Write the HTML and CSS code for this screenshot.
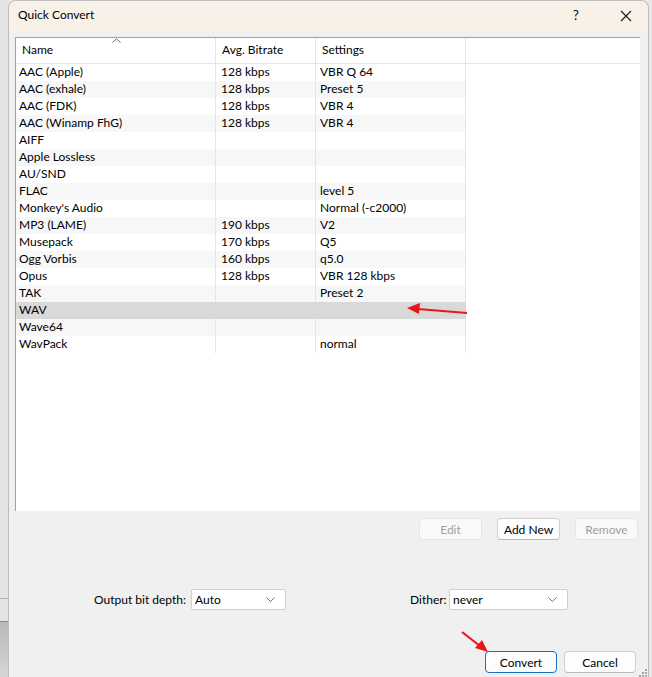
FILE: index.html
```html
<!DOCTYPE html>
<html lang="en">
<head>
  <meta charset="UTF-8" />
  <title>Quick Convert</title>
  <link rel="stylesheet" href="styles.css">
</head>
<body>

  <div class="backdrop">
    <div class="backdrop-line one"></div>
    <div class="backdrop-line two"></div>
    <div class="backdrop-shade"></div>
  </div>

  <div class="dialog">
    <div class="titlebar">
      <span class="title">Quick Convert</span>
      <span class="title-help">?</span>
      <span class="title-close">
        <svg width="12" height="12" viewBox="0 0 12 12"><path d="M1 1 L11 11 M11 1 L1 11" stroke="#1a1a1a" stroke-width="1.1" fill="none"/></svg>
      </span>
    </div>

    <div class="dialog-body">
      <div class="list-box">
        <div class="list-header">
          <div class="head-cell name">Name
            <svg class="sort-arrow" width="9" height="5" viewBox="0 0 9 5"><path d="M0.5 4.5 L4.5 0.8 L8.5 4.5" stroke="#6e6e6e" stroke-width="1" fill="none"/></svg>
          </div>
          <div class="head-cell bitrate">Avg. Bitrate</div>
          <div class="head-cell settings">Settings</div>
          <div class="head-cell rest"></div>
        </div>
        <div class="list-rows">
          <div class="row"><span>AAC (Apple)</span><span>128 kbps</span><span>VBR Q 64</span></div>
          <div class="row"><span>AAC (exhale)</span><span>128 kbps</span><span>Preset 5</span></div>
          <div class="row"><span>AAC (FDK)</span><span>128 kbps</span><span>VBR 4</span></div>
          <div class="row"><span>AAC (Winamp FhG)</span><span>128 kbps</span><span>VBR 4</span></div>
          <div class="row"><span>AIFF</span><span></span><span></span></div>
          <div class="row"><span>Apple Lossless</span><span></span><span></span></div>
          <div class="row"><span>AU/SND</span><span></span><span></span></div>
          <div class="row"><span>FLAC</span><span></span><span>level 5</span></div>
          <div class="row"><span>Monkey's Audio</span><span></span><span>Normal (-c2000)</span></div>
          <div class="row"><span>MP3 (LAME)</span><span>190 kbps</span><span>V2</span></div>
          <div class="row"><span>Musepack</span><span>170 kbps</span><span>Q5</span></div>
          <div class="row"><span>Ogg Vorbis</span><span>160 kbps</span><span>q5.0</span></div>
          <div class="row"><span>Opus</span><span>128 kbps</span><span>VBR 128 kbps</span></div>
          <div class="row"><span>TAK</span><span></span><span>Preset 2</span></div>
          <div class="row selected"><span>WAV</span><span></span><span></span></div>
          <div class="row"><span>Wave64</span><span></span><span></span></div>
          <div class="row"><span>WavPack</span><span></span><span>normal</span></div>
        </div>
      </div>

      <div class="list-buttons">
        <button class="btn disabled">Edit</button>
        <button class="btn">Add New</button>
        <button class="btn disabled">Remove</button>
      </div>

      <div class="options">
        <div class="option bit-depth">
          <label>Output bit depth:</label>
          <div class="select narrow">Auto
            <svg width="9" height="5" viewBox="0 0 9 5"><path d="M0.5 0.5 L4.5 4.5 L8.5 0.5" stroke="#6e6e6e" stroke-width="1" fill="none"/></svg>
          </div>
        </div>
        <div class="option dither">
          <label>Dither:</label>
          <div class="select wide">never
            <svg width="9" height="5" viewBox="0 0 9 5"><path d="M0.5 0.5 L4.5 4.5 L8.5 0.5" stroke="#6e6e6e" stroke-width="1" fill="none"/></svg>
          </div>
        </div>
      </div>

      <div class="dialog-buttons">
        <button class="btn default">Convert</button>
        <button class="btn">Cancel</button>
      </div>
    </div>

    <svg class="grip" width="8" height="8" viewBox="0 0 8 8">
      <rect x="6" y="0" width="2" height="2" fill="#a8a8a8"/>
      <rect x="3" y="3" width="2" height="2" fill="#a8a8a8"/>
      <rect x="6" y="3" width="2" height="2" fill="#a8a8a8"/>
      <rect x="0" y="6" width="2" height="2" fill="#a8a8a8"/>
      <rect x="3" y="6" width="2" height="2" fill="#a8a8a8"/>
      <rect x="6" y="6" width="2" height="2" fill="#a8a8a8"/>
    </svg>
  </div>

  <!-- annotation arrows drawn over the screenshot -->
  <svg class="annotations" width="652" height="677" viewBox="0 0 652 677">
    <path d="M467 313 L418 309" stroke="#e8161b" stroke-width="2.2" fill="none"/>
    <path d="M407 308 L420 303 L419 314 Z" fill="#e8161b"/>
    <path d="M462 632 L480 646" stroke="#e8161b" stroke-width="2.2" fill="none"/>
    <path d="M488 652 L475 648 L482 640 Z" fill="#e8161b"/>
  </svg>

</body>
</html>
```

FILE: styles.css
```css
body {
  margin: 0;
  padding: 0;
  width: 652px;
  height: 677px;
  overflow: hidden;
  background-color: #e8e8e8;
  font-family: Lato, "Noto Sans", sans-serif;
  font-size: 12px;
  color: #000;
  position: relative;
}

.backdrop {
  position: absolute;
  left: 0;
  top: 0;
  width: 8px;
  height: 677px;
  background-color: #e4e4e4;
}

.backdrop-line {
  position: absolute;
  left: 0;
  width: 8px;
  height: 1px;
  background-color: #b4b4b4;
}

.backdrop-line.one {
  top: 598px;
}

.backdrop-line.two {
  top: 621px;
  background-color: #8c8c8c;
}

.backdrop-shade {
  position: absolute;
  left: 0;
  top: 622px;
  width: 8px;
  height: 55px;
  background: linear-gradient(#b8b8b8, #d6d6d6);
}

.dialog {
  position: relative;
  margin-left: 8px;
  width: 639px;
  height: 677px;
  border: 1px solid #bdbdbd;
  border-bottom: none;
  border-radius: 8px 8px 0 0;
  background-color: #f0f0f0;
  display: flex;
  flex-direction: column;
  overflow: hidden;
}

.titlebar {
  height: 30px;
  flex-shrink: 0;
  background-color: #f8f1e8;
  display: flex;
  align-items: center;
  padding-left: 9px;
  padding-bottom: 3px;
  box-sizing: border-box;
}

.title {
  flex: 1;
  font-size: 12px;
}

.title-help {
  width: 20px;
  font-size: 13px;
  margin-right: 27px;
}

.title-close {
  width: 28px;
  display: flex;
  align-items: center;
  padding-top: 2px;
}

.dialog-body {
  flex: 1;
  padding: 6px 8px 0 6px;
  display: flex;
  flex-direction: column;
}

.list-box {
  height: 474px;
  background-color: #fff;
  border-top: 1px solid #a0a0a0;
  border-left: 1px solid #a0a0a0;
  box-sizing: border-box;
  width: 625px;
}

.list-header {
  display: flex;
  height: 25px;
  border-bottom: 1px solid #e5e5e5;
}

.head-cell {
  position: relative;
  border-right: 1px solid #e5e5e5;
  padding-left: 6px;
  line-height: 23px;
  padding-bottom: 2px;
  box-sizing: border-box;
}

.head-cell.name {
  width: 200px;
}

.head-cell.bitrate {
  width: 100px;
}

.head-cell.settings {
  width: 150px;
}

.head-cell.rest {
  flex: 1;
  border-right: none;
}

.sort-arrow {
  position: absolute;
  left: 96px;
  top: 0;
}

.list-rows {
  width: 450px;
}

.row {
  display: grid;
  grid-template-columns: 200px 100px 150px;
  height: 17px;
}

.row:nth-child(even) {
  background-color: #f7f7f7;
}

.row.selected {
  background-color: #d9d9d9;
}

.row span {
  border-right: 1px solid #e5e5e5;
  padding-left: 3px;
  line-height: 15px;
  white-space: nowrap;
}

.row.selected span {
  border-right-color: #d9d9d9;
}

.row span:nth-child(2) {
  padding-left: 5px;
}

.row span:nth-child(3) {
  padding-left: 4px;
}

.btn {
  font-family: Lato, "Noto Sans", sans-serif;
  font-size: 12px;
  height: 22px;
  background-color: #fdfdfd;
  border: 1px solid #d0d0d0;
  border-bottom-color: #b8b8b8;
  border-radius: 4px;
  color: #000;
  padding: 0;
}

.btn.disabled {
  background-color: #f9f9f9;
  border-color: #e5e5e5;
  color: #a0a0a0;
}

.btn.default {
  border: 1px solid #1a6fc3;
}

.list-buttons {
  display: flex;
  justify-content: flex-end;
  gap: 15px;
  margin-top: 7px;
  padding-right: 2px;
}

.list-buttons .btn {
  width: 63px;
}

.options {
  display: flex;
  margin-top: 49px;
  padding-left: 79px;
}

.option {
  display: flex;
  align-items: center;
  gap: 6px;
}

.option label {
  white-space: nowrap;
}

.bit-depth label {
  width: 91px;
  text-align: right;
}

.dither label {
  width: 33px;
}

.option.dither {
  margin-left: 124px;
}

.select {
  height: 21px;
  box-sizing: border-box;
  background-color: #fff;
  border: 1px solid #cfcfcf;
  border-radius: 2px;
  display: flex;
  align-items: center;
  justify-content: space-between;
  padding: 0 10px 0 3px;
}

.select.narrow {
  width: 95px;
}

.select.wide {
  width: 119px;
}

.dialog-buttons {
  display: flex;
  justify-content: flex-end;
  gap: 7px;
  margin-top: 41px;
  padding-right: 4px;
}

.dialog-buttons .btn {
  width: 72px;
}

.grip {
  position: absolute;
  right: 1px;
  bottom: 1px;
}

.annotations {
  position: absolute;
  left: 0;
  top: 0;
  pointer-events: none;
}
```
